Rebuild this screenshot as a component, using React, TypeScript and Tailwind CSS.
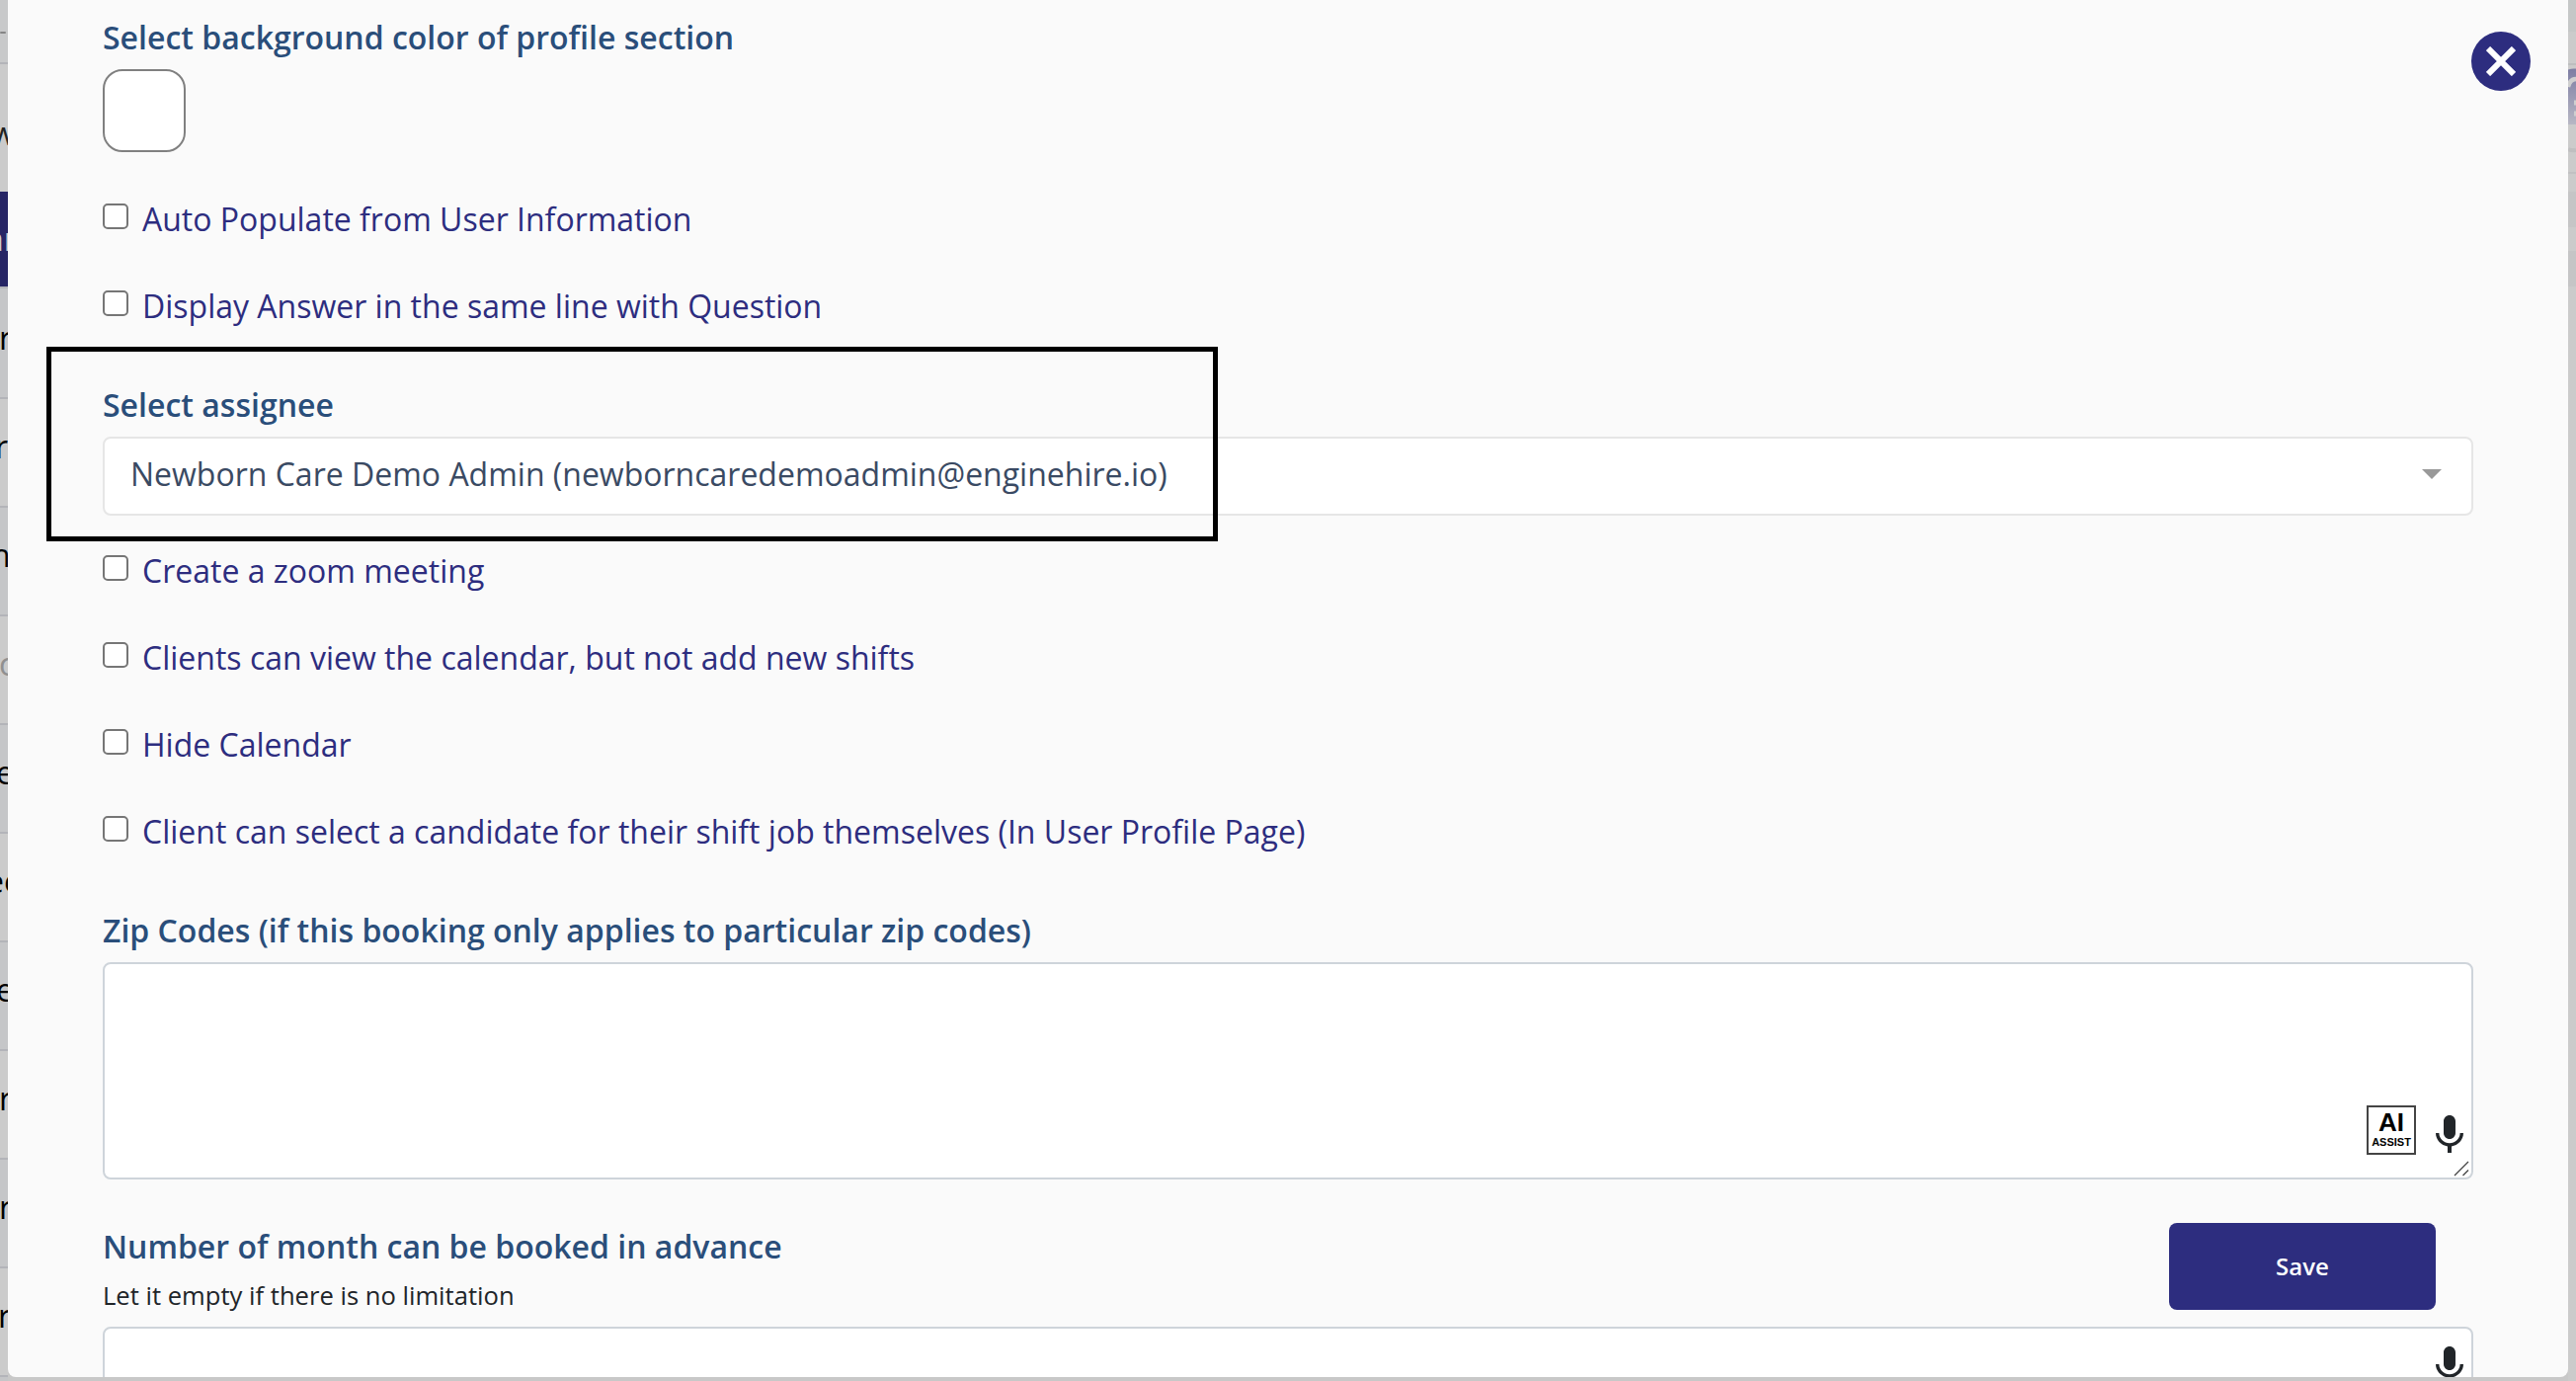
import { ReactNode } from "react";
import clsx from "clsx";

type BackdropRow = {
    text: string;
    offset: string;
    className: string;
};

const backdropRows: BackdropRow[] = [
    { text: "w", offset: "-ml-[9px]", className: "h-[129px] bg-[#cbcbcb] text-[#222] pt-[40px]" },
    { text: "an", offset: "-ml-[14px]", className: "h-[96px] bg-[#262565] text-[#ccc] pt-[18px]" },
    { text: "r", offset: "-ml-px", className: "h-[114px] border-b-2 border-t-2 border-[#b3b4b9] bg-[#c5c6c8] text-black pt-[20px]" },
    { text: "r", offset: "-ml-[5px]", className: "h-[110px] border-b-2 border-[#b3b4b9] bg-[#cbcbcb] text-black pt-[18px]" },
    { text: "n", offset: "-ml-[9px]", className: "h-[110px] border-b-2 border-[#b3b4b9] bg-[#c5c6c8] text-black pt-[18px]" },
    { text: "c", offset: "-ml-px", className: "h-[110px] border-b-2 border-[#b3b4b9] bg-[#cbcbcb] text-[#909090] pt-[18px]" },
    { text: "e", offset: "-ml-1", className: "h-[110px] border-b-2 border-[#b3b4b9] bg-[#c5c6c8] text-black pt-[18px]" },
    { text: "ee", offset: "-ml-[14px]", className: "h-[110px] border-b-2 border-[#b3b4b9] bg-[#cbcbcb] text-black pt-[18px]" },
    { text: "e", offset: "-ml-1", className: "h-[110px] border-b-2 border-[#b3b4b9] bg-[#c5c6c8] text-black pt-[18px]" },
    { text: "r", offset: "-ml-px", className: "h-[110px] border-b-2 border-[#b3b4b9] bg-[#cbcbcb] text-black pt-[18px]" },
    { text: "r", offset: "-ml-px", className: "h-[110px] border-b-2 border-[#b3b4b9] bg-[#c5c6c8] text-black pt-[18px]" },
    { text: "r", offset: "-ml-0.5", className: "h-[110px] border-b-2 border-[#b3b4b9] bg-[#cbcbcb] text-black pt-[18px]" },
];

const displayOptions = [
    "Auto Populate from User Information",
    "Display Answer in the same line with Question",
];

const calendarOptions = [
    "Create a zoom meeting",
    "Clients can view the calendar, but not add new shifts",
    "Hide Calendar",
    "Client can select a candidate for their shift job themselves (In User Profile Page)",
];

function FieldLabel({ children }: { children: ReactNode }) {
    return (
        <h3 className="h-11 text-[32px] leading-[44px] font-semibold whitespace-nowrap text-[#2a4e7a]">
            {children}
        </h3>
    );
}

function CheckboxRow({ label }: { label: string }) {
    return (
        <label className="flex h-[88px] items-start whitespace-nowrap">
            <input
                type="checkbox"
                className="size-[26px] shrink-0 appearance-none rounded-[5px] border-2 border-[#767676] bg-white"
            />
            <span className="ml-3.5 -mt-1.5 text-[32px] leading-[44px] text-[#2d2d7f]">{label}</span>
        </label>
    );
}

function MicIcon({ className }: { className?: string }) {
    return (
        <svg viewBox="0 0 24 24" className={clsx("size-12 fill-[#212529]", className)}>
            <path d="M12 14c1.66 0 2.99-1.34 2.99-3L15 5c0-1.66-1.34-3-3-3S9 3.34 9 5v6c0 1.66 1.34 3 3 3zm5.3-3c0 3-2.54 5.1-5.3 5.1S6.7 14 6.7 11H5c0 3.41 2.72 6.23 6 6.72V21h2v-3.28c3.28-.48 6-3.3 6-6.72h-1.7z" />
        </svg>
    );
}

function Backdrop() {
    return (
        <div className="w-2 shrink-0 overflow-hidden bg-[#c5c6c8]">
            {/* Page header */}
            <div className="h-[65px] border-b-2 border-[#b3b4b9] bg-[#c8c9ca] pt-8">
                <div className="h-0.5 w-1.5 rounded-full bg-[#858585]" />
            </div>
            {backdropRows.map((row, index) => (
                <div key={index} className={clsx("text-[32px] leading-[60px]", row.className)}>
                    <span className={row.offset}>{row.text}</span>
                </div>
            ))}
        </div>
    );
}

function BackdropEdge() {
    return (
        <div className="w-2 shrink-0 overflow-hidden bg-[#cbcbcb]">
            <div className="h-8 bg-[#c5c7c7]" />
            <div className="h-[34px] border-b-2 border-[#bdbebf]" />
            <svg viewBox="0 0 8 90" className="h-[90px] w-2">
                <defs>
                    <linearGradient id="avatar" x1="0" y1="0" x2="0" y2="1">
                        <stop offset="0" stopColor="#7d7da3" />
                        <stop offset="1" stopColor="#b7b7c4" />
                    </linearGradient>
                </defs>
                <path d="M0 4.500Q4 3 8 3.500V60H0Z" fill="url(#avatar)" />
                <path d="M0 22Q2 14 8 14" fill="none" stroke="#cfcfcf" strokeWidth="4.500" />
                <path d="M6 38h2M6 49h2" stroke="#cfcfcf" strokeWidth="5" />
                <path d="M0 85q4 2 8 1" fill="none" stroke="#bfbfc0" strokeWidth="4" />
            </svg>
            <div className="mt-[18px] h-0.5 bg-[#c1c1c2]" />
            <div className="mt-[18px] h-9 bg-[#c5c5c6]" />
            <div className="mt-6 h-9 bg-[#c5c5c6]" />
        </div>
    );
}

export default function App() {
    return (
        <div className="flex h-[1398px] w-[2608px] overflow-hidden bg-[#c8c8c8] font-['Open_Sans',sans-serif]">
            <Backdrop />

            <main className="relative h-[1394px] w-[2592px] shrink-0 overflow-hidden rounded-b-lg bg-[#fafafa] px-24 pt-4">
                <FieldLabel>Select background color of profile section</FieldLabel>
                <button className="mt-2.5 block size-[84px] rounded-[20px] border-2 border-[#808080] bg-white" />

                <div className="mt-[52px]">
                    {displayOptions.map((label) => (
                        <CheckboxRow key={label} label={label} />
                    ))}
                </div>

                <div className="mt-1.5">
                    <FieldLabel>Select assignee</FieldLabel>
                </div>
                <div className="mt-2.5 flex h-20 items-center justify-between rounded-lg border-2 border-[#e6e6e6] bg-white pr-[30px] pb-1 pl-[26px]">
                    <span className="text-[32px] leading-[44px] whitespace-nowrap text-[#3a4a63]">
                        Newborn Care Demo Admin (newborncaredemoadmin@enginehire.io)
                    </span>
                    <svg viewBox="0 0 20 10" className="h-2.5 w-5 fill-[#999999]">
                        <path d="M0 0h20L10 10z" />
                    </svg>
                </div>

                <div className="mt-10">
                    {calendarOptions.map((label) => (
                        <CheckboxRow key={label} label={label} />
                    ))}
                </div>

                <div className="mt-1.5">
                    <FieldLabel>Zip Codes (if this booking only applies to particular zip codes)</FieldLabel>
                </div>
                <div className="mt-2.5 flex h-[220px] justify-end rounded-lg border-2 border-[#ced4da] bg-white">
                    <div className="mt-[143px] flex h-[50px] w-[50px] flex-col items-center border-2 border-[#444] pt-1 font-['Liberation_Sans',sans-serif] font-bold text-black">
                        <span className="text-[26px] leading-[22px]">AI</span>
                        <span className="mt-1 text-[11px] leading-[11px]">ASSIST</span>
                    </div>
                    <MicIcon className="mt-[149px] ml-2.5" />
                    {/* Resize grip */}
                    <svg viewBox="0 0 16 16" className="mt-[199px] -ml-5 mr-0.5 size-4 fill-none stroke-[#444] stroke-[1.3]">
                        <path d="M1 15L15 1M9.500 15L15 9.500" />
                    </svg>
                </div>

                <div className="mt-[46px]">
                    <FieldLabel>Number of month can be booked in advance</FieldLabel>
                    <p className="mt-2.5 text-[25.6px] leading-[36px] text-[#212529]">Let it empty if there is no limitation</p>
                </div>
                <div className="mt-[13px] flex h-20 justify-end rounded-lg border-2 border-[#ced4da] bg-white">
                    <MicIcon className="mt-3.5 -mr-0.5" />
                </div>

                {/* Floating controls */}
                <button className="absolute top-8 right-[38px] flex size-[60px] items-center justify-center rounded-full bg-[#2d2d7f]">
                    <svg viewBox="0 0 30 30" className="size-[30px] stroke-white stroke-[6]">
                        <path d="M2 2L28 28M28 2L2 28" />
                    </svg>
                </button>
                <button className="absolute top-[1238px] right-[134px] h-[88px] w-[270px] rounded-lg bg-[#2d2d7f] text-2xl font-semibold text-white">
                    Save
                </button>
                <div className="pointer-events-none absolute top-[351px] left-[39px] h-[197px] w-[1186px] border-[5px] border-black" />
            </main>

            <BackdropEdge />
        </div>
    );
}
